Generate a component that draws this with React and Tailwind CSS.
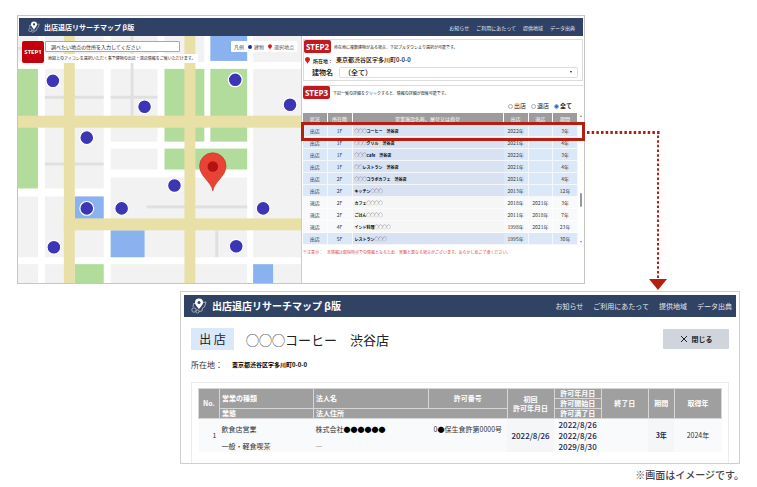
import React, { useState } from 'react';

const NAV = ['お知らせ', 'ご利用にあたって', '提供地域', 'データ出典'];

const SHOPS = [
  { status: '出店', floor: '1F', name: '◯◯◯コーヒー　渋谷店', open: '2022年', close: '', term: '3年' },
  { status: '出店', floor: '1F', name: '◯◯◯グリル　渋谷店', open: '2021年', close: '', term: '4年' },
  { status: '出店', floor: '1F', name: '◯◯◯Cafe　渋谷店', open: '2022年', close: '', term: '3年' },
  { status: '出店', floor: '1F', name: '◯◯レストラン　渋谷店', open: '2021年', close: '', term: '4年' },
  { status: '出店', floor: '2F', name: '◯◯◯コラボカフェ　渋谷店', open: '2021年', close: '', term: '4年' },
  { status: '出店', floor: '2F', name: 'キッチン◯◯◯', open: '2013年', close: '', term: '12年' },
  { status: '退店', floor: '2F', name: 'カフェ◯◯◯◯', open: '2018年', close: '2021年', term: '3年' },
  { status: '退店', floor: '2F', name: 'ごはん◯◯◯◯', open: '2011年', close: '2018年', term: '7年' },
  { status: '退店', floor: '4F', name: 'インド料理◯◯◯◯', open: '1998年', close: '2021年', term: '23年' },
  { status: '出店', floor: '5F', name: 'レストラン◯◯◯', open: '1995年', close: '', term: '30年' },
];

// x, y, w, h
const BLOCKS = [
  [18, 36, 20, 26], [45, 36, 59, 26], [111, 36, 47, 26], [165, 36, 40, 26], [254, 36, 48, 26],
  [45, 69, 59, 120], [111, 69, 47, 73], [254, 69, 48, 189], [111, 149, 47, 21],
  [111, 178, 137, 80], [18, 197, 20, 61], [45, 197, 59, 61],
  [18, 265, 20, 20], [45, 265, 59, 20], [111, 265, 137, 20], [254, 265, 48, 20],
];
const PARKS = [
  [18, 69, 20, 120], [165, 69, 40, 73], [211, 69, 37, 73], [165, 149, 83, 21], [75, 265, 29, 20],
];
const WATER = [[211, 36, 37, 25], [75, 197, 29, 23], [111, 231, 34, 27], [254, 265, 20, 20]];
const LANES = [
  [45, 96, 59, 3], [111, 96, 47, 3], [131, 36, 3, 80], [45, 163, 59, 3], [147, 206, 101, 3], [216, 231, 3, 27], [18, 47, 20, 3],
];
const ROADS = [[64, 36, 11, 249], [185, 36, 11, 249], [18, 116, 284, 12], [64, 219, 238, 12]];
const DOTS = [
  [53, 81], [145, 107], [87, 138], [236, 80], [291, 105], [175, 186],
  [87, 209], [122, 209], [264, 209], [54, 248], [237, 247],
];

const Rects = ({ items, fill }) =>
  items.map(([x, y, w, h], i) => <rect key={i} x={x} y={y} width={w} height={h} fill={fill} />);

const Logo = ({ className }) => (
  <svg viewBox="0 0 16 16" className={className} fill="none" stroke="#a9b4c8" aria-hidden="true">
    <path d="M5 5.500H2.500L2 9M11 4.500l4-.5-1.500 5-2 1-.5 3-3 .5" strokeWidth="0.900" />
    <circle cx="3" cy="12" r="2.200" strokeWidth="0.900" />
    <circle cx="6.500" cy="13.500" r="1.600" strokeWidth="0.900" />
    <path d="M8 11.500C7 9 4 7.500 4 4.500a4 4 0 0 1 8 0C12 7.500 9 9 8 11.500z" fill="#fff" stroke="none" />
    <circle cx="8" cy="4.500" r="1.500" fill="#304363" stroke="none" />
  </svg>
);

const Pin = ({ className }) => (
  <svg viewBox="0 0 10 14" className={className} aria-hidden="true">
    <path d="M5 14C4.500 10 0 8.500 0 5a5 5 0 0 1 10 0c0 3.500-4.500 5-5 9z" fill="#dc1f1f" />
    <circle cx="5" cy="5" r="1.600" fill="#b01010" />
  </svg>
);

const TownMap = () => (
  <svg viewBox="18 36 284 248" className="block w-full" role="img" aria-label="地図">
    <rect x="18" y="36" width="284" height="249" fill="#fff" />
    <Rects items={BLOCKS} fill="#f2f2f2" />
    <Rects items={LANES} fill="#e0e0e0" />
    <Rects items={PARKS} fill="#b2dc9c" />
    <Rects items={WATER} fill="#8ab2ee" />
    <Rects items={ROADS} fill="#e9e0a8" />
    {DOTS.map(([x, y]) => (
      <circle key={`${x}-${y}`} cx={x} cy={y} r="6.900" fill="#3c35b5" stroke="#fff" strokeWidth="1.200" />
    ))}
    <path
      d="M213.500 191.500C212 182 200.200 177 200.200 166.500a13.300 13.300 0 0 1 26.600 0C226.800 177 215 182 213.500 191.500z"
      fill="#e94335"
      stroke="#b8322a"
      strokeWidth="0.600"
    />
    <circle cx="213.500" cy="167" r="5.300" fill="#b01312" />
  </svg>
);

const MapPane = () => (
  <section className="relative w-1/2 shrink-0">
    <TownMap />
    <div className="absolute top-[5px] right-1 left-1 flex items-start">
      <div className="flex size-[22px] shrink-0 items-center justify-center rounded-[2px] bg-[#c4000c] font-['Open_Sans',sans-serif] text-[6px] font-bold text-white">
        STEP1
      </div>
      <div className="ml-px flex flex-col gap-[2px]">
        <input
          type="text"
          aria-label="地点の住所"
          placeholder="調べたい地点の住所を入力してください"
          className="h-[11px] w-[135px] rounded-[1px] border border-[#a8a8a8] bg-white px-[5px] text-[5px] leading-none placeholder:text-[#222]"
        />
        <p className="bg-white px-[3px] py-[2px] text-[4px] leading-[5px] whitespace-nowrap text-[#222]">
          地図上のアイコンを選択いただく事で建物の出店・退店情報をご覧いただけます。
        </p>
      </div>
      <div className="ml-auto flex h-[11px] items-center gap-1 rounded-[1px] bg-white px-[3px] text-[5px] leading-none whitespace-nowrap text-[#555]">
        <span>凡例</span>
        <span className="flex items-center gap-[2px]">
          <i className="size-1 rounded-full bg-[#1d2f9c]" />
          建物
        </span>
        <span className="flex items-center gap-[2px]">
          <Pin className="h-[6px] w-[4px]" />
          選択地点
        </span>
      </div>
    </div>
  </section>
);

const StepBadge = ({ children }) => (
  <h2 className="flex h-[13px] w-[27px] shrink-0 items-center justify-center rounded-[2px] bg-[#bf1a20] font-['Open_Sans',sans-serif] text-[8px] leading-none font-bold text-white">
    {children}
  </h2>
);

const BuildingPanel = () => (
  <section className="border border-[#dcdcdc] pb-[2px]">
    <div className="flex items-center gap-[3px]">
      <StepBadge>STEP2</StepBadge>
      <p className="text-[4px] leading-none text-[#222]">所在地に複数建物がある場合、下記プルダウンより選択が可能です。</p>
    </div>
    <div className="flex h-[14px] items-center gap-[3px] pl-px text-[5px] leading-none font-medium text-black">
      <Pin className="h-[7px] w-[5px]" />
      <span>所在地：</span>
      <span className="text-[6px] font-medium">東京都渋谷区宇多川町0-0-0</span>
    </div>
    <div className="flex items-center gap-[6px] pr-1 pl-2">
      <label htmlFor="building" className="text-[7px] leading-none font-medium text-black">建物名</label>
      <div className="relative flex-1">
        <select
          id="building"
          className="block h-[11px] w-full appearance-none rounded-[2px] border border-[#dedede] bg-white px-1 text-[7px] leading-none font-medium text-black"
        >
          <option>（全て）</option>
        </select>
        <span className="pointer-events-none absolute top-1 right-[6px] border-x-[1px] border-t-2 border-x-transparent border-t-[#222]" />
      </div>
    </div>
  </section>
);

const StatusFilter = () => {
  const [value, setValue] = useState('全て');
  return (
    <fieldset className="flex h-[14px] items-center justify-end gap-[5px] pr-[11px] text-[6px] leading-none text-[#222]">
      {['出店', '退店', '全て'].map((label) => (
        <label key={label} className={`flex items-center gap-px ${value === label ? 'font-bold' : ''}`}>
          <input
            type="radio"
            name="status"
            checked={value === label}
            onChange={() => setValue(label)}
            className="size-[5px] appearance-none rounded-full border border-[#aaa] bg-white checked:border-[#8fbdf0] checked:bg-[#2b6fc4]"
          />
          {label}
        </label>
      ))}
    </fieldset>
  );
};

const ShopTable = () => (
  <div className="relative flex">
    <table className="w-full table-fixed border-separate border-spacing-0 text-center text-[5px] leading-none text-[#333]">
      <colgroup>
        <col className="w-[9%]" />
        <col className="w-[9%]" />
        <col />
        <col className="w-[9%]" />
        <col className="w-[9%]" />
        <col className="w-[9%]" />
      </colgroup>
      <thead>
        <tr className="h-[12px] bg-[#9c9c9c] text-white">
          {['状況', '所在階', '営業施設名称、屋号又は商号', '出店', '退店', '期間'].map((h) => (
            <th key={h} className="border-r border-white p-0 pb-[2px] font-normal">{h}</th>
          ))}
        </tr>
      </thead>
      <tbody>
        {SHOPS.map((s) => {
          const open = s.status === '出店';
          const cell = `border-r border-b border-white/70 p-0 ${open ? 'bg-[#dbe8f8]' : 'bg-[#f8f9fa]'}`;
          return (
            <tr key={s.name} className="h-[12px]">
              <td className={cell}>{s.status}</td>
              <td className={cell}>{s.floor}</td>
              <td className={`border-b border-white/70 p-0 pl-[2px] text-left text-[4px] font-bold text-black ${open ? 'bg-[#d9e2f2]' : 'bg-[#f6f6f6]'}`}>
                {s.name}
              </td>
              <td className={cell}>{s.open}</td>
              <td className={cell}>{s.close}</td>
              <td className={cell}>{s.term}</td>
            </tr>
          );
        })}
      </tbody>
    </table>
    <div className="flex w-[5px] shrink-0 flex-col items-center py-[2px]">
      <span className="border-x-[1px] border-b-2 border-x-transparent border-b-[#888]" />
      <span className="mt-[76px] h-[14px] w-[2px] rounded-full bg-[#999]" />
      <span className="mt-auto border-x-[1px] border-t-2 border-x-transparent border-t-[#888]" />
    </div>
    {/* frame around the row that opens the detail window */}
    <div className="absolute top-[9px] -right-[2px] -left-[2px] h-[19px] border-[3px] border-[#b4200f]" />
  </div>
);

const Nav = ({ className }) => (
  <nav className={`flex text-[#e3e7ef] ${className}`}>
    {NAV.map((label) => (
      <a key={label} href="#" className="whitespace-nowrap">{label}</a>
    ))}
  </nav>
);

const SearchWindow = () => (
  <section className="mr-[172px] ml-[17px] border border-[#c6c6c6] bg-white">
    <header className="mx-px mt-[2px] flex h-[18px] items-center bg-[#2f4265] pr-2 pl-[9px]">
      <Logo className="size-[12px]" />
      <h1 className="ml-1 text-[7px] leading-none font-bold text-white">出店退店リサーチマップ β版</h1>
      <Nav className="ml-auto gap-[7px] text-[5px] leading-none" />
    </header>
    <div className="flex">
      <MapPane />
      <div className="min-w-0 flex-1 border-l border-[#ccc] pt-[3px] pr-px pl-px">
        <BuildingPanel />
        <section className="mt-1 border-t border-[#dcdcdc]">
          <div className="flex items-center gap-[3px]">
            <StepBadge>STEP3</StepBadge>
            <p className="text-[4px] leading-none text-[#222]">下記一覧の詳細をクリックすると、情報の詳細が閲覧可能です。</p>
          </div>
          <StatusFilter />
          <ShopTable />
          <p className="mt-1 text-[4px] leading-[6px] text-[#dc4a30]">
            ※注意点：　本情報は取得時点での情報となるため、実態と異なる場合がございます。あらかじめご了承ください。
          </p>
        </section>
      </div>
    </div>
  </section>
);

const HEAD = 'border border-[#d6d6d6] bg-[#9f9f9f] p-0 font-bold text-white';
const CELL = 'bg-[#f8fafc] p-0';

const LicenseTable = () => (
  <table className="w-full table-fixed text-center text-[7px] leading-[7px] text-[#333]">
    <colgroup>
      <col className="w-[4%]" />
      <col className="w-[18%]" />
      <col className="w-[22%]" />
      <col className="w-[15%]" />
      <col className="w-[9%]" />
      <col className="w-[9%]" />
      <col className="w-[9%]" />
      <col className="w-[5%]" />
      <col className="w-[9%]" />
    </colgroup>
    <thead>
      <tr className="h-[10px]">
        <th rowSpan={3} className={HEAD}>No.</th>
        <th rowSpan={2} className={`${HEAD} pl-[2px] text-left`}>営業の種類</th>
        <th rowSpan={2} className={`${HEAD} pl-[2px] text-left`}>法人名</th>
        <th rowSpan={2} className={HEAD}>許可番号</th>
        <th rowSpan={3} className={`${HEAD} leading-[9px]`}>初回<br />許可年月日</th>
        <th className={HEAD}>許可年月日</th>
        <th rowSpan={3} className={HEAD}>終了日</th>
        <th rowSpan={3} className={HEAD}>期間</th>
        <th rowSpan={3} className={HEAD}>取得年</th>
      </tr>
      <tr className="h-[10px]">
        <th className={HEAD}>許可開始日</th>
      </tr>
      <tr className="h-[10px]">
        <th className={`${HEAD} pl-[2px] text-left`}>業態</th>
        <th colSpan={2} className={`${HEAD} pl-[2px] text-left`}>法人住所</th>
        <th className={HEAD}>許可満了日</th>
      </tr>
    </thead>
    <tbody>
      <tr className="h-[11px]">
        <td rowSpan={3} className={`${CELL} pr-[3px] text-right`}>1</td>
        <td rowSpan={2} className={`${CELL} pl-[2px] text-left`}>飲食店営業</td>
        <td rowSpan={2} className={`${CELL} pl-[2px] text-left`}>
          株式会社<span className="text-black">●●●●●●</span>
        </td>
        <td rowSpan={2} className={`${CELL} whitespace-nowrap`}>0<span className="text-black">●</span>保生食許第0000号</td>
        <td rowSpan={3} className="bg-[#f5f6f8] p-0 text-[8px] font-medium text-[#1e1f4d]">2022/8/26</td>
        <td className={`${CELL} text-[8px] font-medium text-[#1e1f4d]`}>2022/8/26</td>
        <td rowSpan={3} className={CELL} />
        <td rowSpan={3} className="bg-[#f5f6f8] p-0 font-bold text-[#1e1f4d]">3年</td>
        <td rowSpan={3} className={CELL}>2024年</td>
      </tr>
      <tr className="h-[11px]">
        <td className={`${CELL} text-[8px] font-medium text-[#1e1f4d]`}>2022/8/26</td>
      </tr>
      <tr className="h-[11px]">
        <td className={`${CELL} pl-[2px] text-left`}>一般・軽食喫茶</td>
        <td colSpan={2} className={`${CELL} pl-[2px] text-left`}>―</td>
        <td className={`${CELL} text-[8px] font-medium text-[#1e1f4d]`}>2029/8/30</td>
      </tr>
    </tbody>
  </table>
);

const DetailWindow = () => (
  <section className="mt-[7px] mr-[17px] ml-[180px] border border-[#cfcfcf] bg-white px-[3px] pt-[3px]">
    <header className="flex h-[22px] items-center bg-[#304363] pr-1 pl-[7px]">
      <Logo className="size-[16px]" />
      <h2 className="ml-[5px] text-[10px] leading-none font-bold text-white">出店退店リサーチマップ β版</h2>
      <Nav className="ml-auto gap-[10px] text-[7px] leading-none" />
    </header>
    <div className="px-[7px] pt-[11px]">
      <div className="flex items-center">
        <span className="flex h-[22px] w-[43px] items-center justify-center bg-[#dae8fc] text-[12px] leading-none text-[#222]">
          出 店
        </span>
        <h3 className="ml-[12px] text-[13px] leading-none text-[#222]">◯◯◯コーヒー　渋谷店</h3>
        <button
          type="button"
          className="ml-auto flex h-[20px] w-[66px] items-center justify-center gap-1 rounded-[1px] bg-[#d0d5dd] text-[7px] leading-none font-bold text-[#222]"
        >
          <svg viewBox="0 0 8 8" className="size-[8px]" stroke="#222" aria-hidden="true">
            <path d="M1 1l6 6M7 1L1 7" />
          </svg>
          閉じる
        </button>
      </div>
      <p className="mt-[11px] flex items-center gap-[9px] text-[8px] leading-none text-[#333]">
        所在地：
        <span className="text-[6px] font-bold text-black">東京都渋谷区宇多川町0-0-0</span>
      </p>
      <div className="mt-[13px] border border-b-0 border-[#ececec] px-[6px] pt-[5px] pb-[11px]">
        <LicenseTable />
      </div>
    </div>
  </section>
);

// dotted connector from the highlighted row down to the detail window
const Connector = () => (
  <svg viewBox="0 0 81 160" className="absolute top-[130px] right-[90px] h-[160px] w-[81px]" aria-hidden="true">
    <path d="M1 2.500H74" stroke="#b4200f" strokeWidth="3" strokeDasharray="2.500 2.170" />
    <path d="M72 5.500V149" stroke="#b4200f" strokeWidth="2" strokeDasharray="2.500 2.170" />
    <path d="M63 149h18l-9 11z" fill="#b4200f" />
  </svg>
);

export default function App() {
  return (
    <main className="relative bg-white pt-[15px] font-['Noto_Sans_CJK_JP',sans-serif]">
      <SearchWindow />
      <DetailWindow />
      <Connector />
      <p className="mt-[6px] mr-[13px] text-right text-[10px] leading-none font-medium text-[#444]">※画面はイメージです。</p>
    </main>
  );
}
